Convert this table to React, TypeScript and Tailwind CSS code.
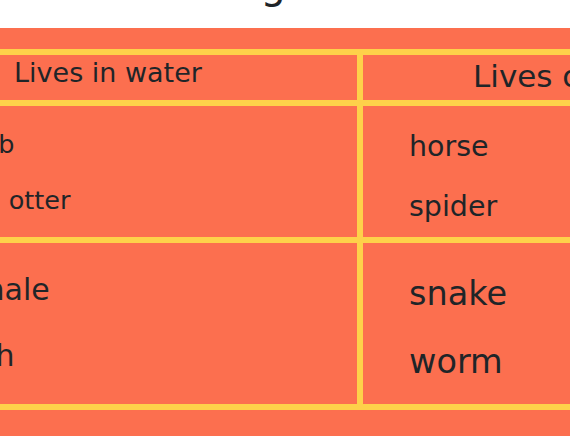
import React from "react";

export default function App() {
  return (
    <div className="w-[570px] h-[442px] overflow-hidden bg-white font-['DejaVu_Sans',sans-serif] text-[#1f2528]">
      <div className="h-[28px] overflow-hidden">
        <h1 className="mt-[-36px] pl-[142px] text-[40px] leading-[40px] font-normal whitespace-nowrap">
          Sorting animals
        </h1>
      </div>
      <div className="bg-[#fc6f4f] pt-[21px] pb-[26px]">
        <div className="ml-[-100px] w-[871px] grid grid-cols-[451px_402px] grid-rows-[45px_131px_161px] gap-[6px] p-[6px] bg-[#fed14a]">
          <div className="bg-[#fc6f4f] pl-[108px] pt-[4px] text-[27px] leading-none whitespace-nowrap">
            Lives in water
          </div>
          <div className="bg-[#fc6f4f] pl-[110px] pt-[6px] text-[31px] leading-none whitespace-nowrap">
            Lives on land
          </div>
          <ul className="bg-[#fc6f4f] pl-[52px] pt-[10px] text-[25.5px] leading-[56px]">
            <li>crab</li>
            <li className="ml-[-11px] [word-spacing:9px]">sea otter</li>
          </ul>
          <ul className="bg-[#fc6f4f] pl-[46px] pt-[11px] text-[28.5px] leading-[60px]">
            <li>horse</li>
            <li>spider</li>
          </ul>
          <ul className="bg-[#fc6f4f] pl-[55px] pt-[14px] text-[30px] leading-[66px]">
            <li>whale</li>
            <li>fish</li>
          </ul>
          <ul className="bg-[#fc6f4f] pl-[46px] pt-[17px] text-[33.5px] leading-[68px]">
            <li>snake</li>
            <li>worm</li>
          </ul>
        </div>
      </div>
    </div>
  );
}
